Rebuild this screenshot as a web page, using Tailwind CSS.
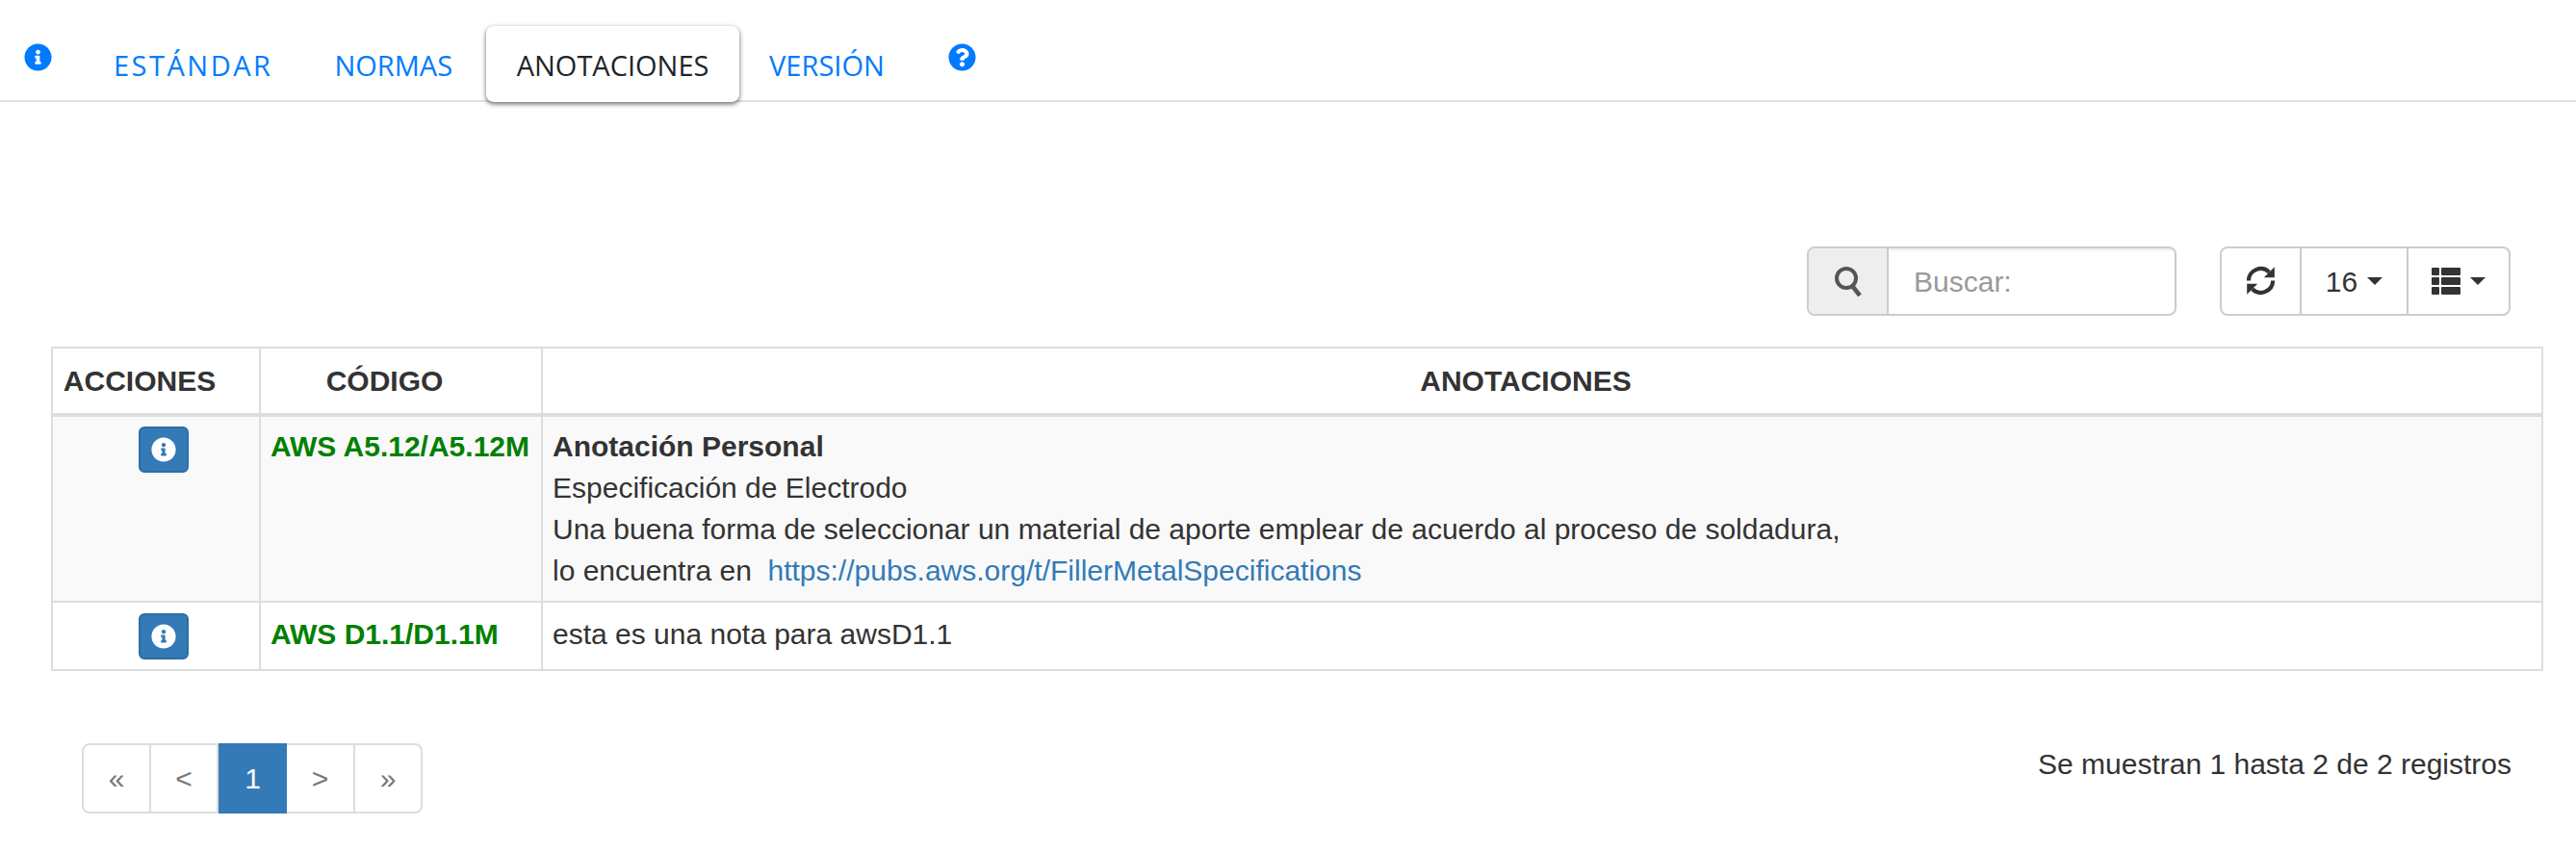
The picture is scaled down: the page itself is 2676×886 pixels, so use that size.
<!DOCTYPE html>
<html lang="es">

<head>
    <meta charset="UTF-8" />
    <title>Anotaciones</title>
    <script src="https://cdn.jsdelivr.net/npm/@tailwindcss/browser@4"></script>
</head>

<body class="bg-white font-['Liberation_Sans',Arial,sans-serif] text-[30px] leading-[43px] text-[#333]">

    <!-- Tabs -->
    <div class="flex items-start h-[106px] pt-[27px] border-b-2 border-[#dee2e6] font-['Open_Sans',sans-serif] text-[29px] leading-[40px]">
        <svg class="ml-[25px] mt-[18px] w-[29px] h-[29px] text-[#007bff]" viewBox="0 0 512 512" fill="currentColor"><path d="M256 8C119.043 8 8 119.083 8 256c0 136.997 111.043 248 248 248s248-111.003 248-248C504 119.083 392.957 8 256 8zm0 110c23.196 0 42 18.804 42 42s-18.804 42-42 42-42-18.804-42-42 18.804-42 42-42zm56 254c0 6.627-5.373 12-12 12h-88c-6.627 0-12-5.373-12-12v-24c0-6.627 5.373-12 12-12h12v-64h-12c-6.627 0-12-5.373-12-12v-24c0-6.627 5.373-12 12-12h64c6.627 0 12 5.373 12 12v100h12c6.627 0 12 5.373 12 12v24z"/></svg>
        <a class="ml-[64px] mt-[21px] text-[#007bff] tracking-[2.5px]">ESTÁNDAR</a>
        <a class="ml-[64px] mt-[21px] text-[#007bff]">NORMAS</a>
        <a class="ml-[35px] w-[263px] h-[79px] pt-[21px] text-center rounded-lg bg-white text-[#212529] shadow-[0_2px_5px_rgba(0,0,0,0.6)]">ANOTACIONES</a>
        <a class="ml-[31px] mt-[21px] text-[#007bff]">VERSIÓN</a>
        <svg class="ml-[66px] mt-[18px] w-[29px] h-[29px] text-[#007bff]" viewBox="0 0 512 512" fill="currentColor"><path d="M504 256c0 136.997-111.043 248-248 248S8 392.997 8 256C8 119.083 119.043 8 256 8s248 111.083 248 248zM262.655 90c-54.497 0-89.255 22.957-116.549 63.758-3.536 5.286-2.353 12.415 2.715 16.258l34.699 26.31c5.205 3.947 12.621 3.008 16.665-2.122 17.864-22.658 30.113-35.797 57.303-35.797 20.429 0 45.698 13.148 45.698 32.958 0 14.976-12.363 22.667-32.534 33.976C247.128 238.528 216 254.941 216 296v4c0 6.627 5.373 12 12 12h56c6.627 0 12-5.373 12-12v-1.333c0-28.462 83.186-29.647 83.186-106.667 0-58.002-60.165-102-116.531-102zM256 338c-25.365 0-46 20.635-46 46 0 25.364 20.635 46 46 46s46-20.636 46-46c0-25.365-20.635-46-46-46z"/></svg>
    </div>

    <!-- Toolbar -->
    <div class="flex justify-end mt-[150px] pr-[68px] h-[72px]">
        <div class="flex w-[384px] border-2 border-[#ccc] rounded-lg overflow-hidden">
            <span class="flex items-center justify-center w-[83px] bg-[#eee] border-r-2 border-[#ccc]">
                <svg class="w-[30px] h-[32px] text-[#555]" viewBox="0 0 30 32" fill="none" stroke="currentColor"><circle cx="13" cy="13" r="10" stroke-width="4"/><path d="M20 22l7 9" stroke-width="4.5"/></svg>
            </span>
            <span class="flex flex-1 items-center pl-[26px] text-[#999] shadow-[inset_0_2px_2px_rgba(0,0,0,0.075)]">Buscar:</span>
        </div>
        <div class="flex ml-[45px] w-[302px] border-2 border-[#ccc] rounded-lg">
            <span class="flex items-center justify-center w-[83px] border-r-2 border-[#ccc]">
                <svg class="w-[33px] h-[33px] -mt-[2px] text-[#333]" viewBox="0 0 30 30" fill="none" stroke="currentColor"><path d="M3.5 15A11.5 11.5 0 0 1 23 7" stroke-width="3.8"/><path d="M26.5 15A11.5 11.5 0 0 1 7 23" stroke-width="3.8"/><path d="M28 2v10H18zM2 28V18h10z" fill="currentColor" stroke="none"/></svg>
            </span>
            <span class="flex items-center justify-center gap-[10px] w-[111px] border-r-2 border-[#ccc]">
                16
                <span class="w-0 h-0 border-x-[8px] border-x-transparent border-t-[8px] border-t-[#333]"></span>
            </span>
            <span class="flex items-center justify-center gap-[10px] flex-1">
                <svg class="w-[30px] h-[28px] text-[#333]" viewBox="0 0 30 28" fill="currentColor"><rect width="8" height="8" rx="1"/><rect x="10" width="20" height="8" rx="1"/><rect y="10" width="8" height="8" rx="1"/><rect x="10" y="10" width="20" height="8" rx="1"/><rect y="20" width="8" height="8" rx="1"/><rect x="10" y="20" width="20" height="8" rx="1"/></svg>
                <span class="w-0 h-0 border-x-[8px] border-x-transparent border-t-[8px] border-t-[#333]"></span>
            </span>
        </div>
    </div>

    <!-- Table -->
    <div class="mx-[53px] mt-[32px]">
        <table class="w-[2589px] table-fixed border-collapse border-2 border-[#ddd]">
            <colgroup>
                <col class="w-[216px]">
                <col class="w-[293px]">
                <col>
            </colgroup>
            <thead>
                <tr class="h-[70px]">
                    <th class="border-2 border-b-4 border-[#ddd] pl-[10px] pr-[44px] text-center font-bold">ACCIONES</th>
                    <th class="border-2 border-b-4 border-[#ddd] pl-[10px] pr-[44px] text-center font-bold">CÓDIGO</th>
                    <th class="border-2 border-b-4 border-[#ddd] pl-[10px] pr-[44px] text-center font-bold">ANOTACIONES</th>
                </tr>
            </thead>
            <tbody>
                <tr class="bg-[#f9f9f9]">
                    <td class="border-2 border-[#ddd] px-[10px] pt-[10px] align-top text-center">
                        <button class="inline-flex items-center justify-center ml-[15px] w-[52px] h-[48px] align-top rounded-md bg-[#337ab7] border-2 border-[#2e6da4]">
                            <svg class="w-[26px] h-[26px] text-white" viewBox="0 0 512 512" fill="currentColor"><path d="M256 8C119.043 8 8 119.083 8 256c0 136.997 111.043 248 248 248s248-111.003 248-248C504 119.083 392.957 8 256 8zm0 110c23.196 0 42 18.804 42 42s-18.804 42-42 42-42-18.804-42-42 18.804-42 42-42zm56 254c0 6.627-5.373 12-12 12h-88c-6.627 0-12-5.373-12-12v-24c0-6.627 5.373-12 12-12h12v-64h-12c-6.627 0-12-5.373-12-12v-24c0-6.627 5.373-12 12-12h64c6.627 0 12 5.373 12 12v100h12c6.627 0 12 5.373 12 12v24z"/></svg>
                        </button>
                    </td>
                    <td class="border-2 border-[#ddd] px-[10px] pt-[9px] pb-[10px] align-top font-bold text-[#008000]">AWS A5.12/A5.12M</td>
                    <td class="border-2 border-[#ddd] px-[10px] pt-[9px] pb-[10px] align-top">
                        <b>Anotación Personal</b><br>
                        Especificación de Electrodo<br>
                        Una buena forma de seleccionar un material de aporte emplear de acuerdo al proceso de soldadura,<br>
                        lo encuentra en &nbsp;<a class="text-[#337ab7]">https://pubs.aws.org/t/FillerMetalSpecifications</a>
                    </td>
                </tr>
                <tr class="h-[71px]">
                    <td class="border-2 border-[#ddd] px-[10px] pt-[11px] align-top text-center">
                        <button class="inline-flex items-center justify-center ml-[15px] w-[52px] h-[48px] align-top rounded-md bg-[#337ab7] border-2 border-[#2e6da4]">
                            <svg class="w-[26px] h-[26px] text-white" viewBox="0 0 512 512" fill="currentColor"><path d="M256 8C119.043 8 8 119.083 8 256c0 136.997 111.043 248 248 248s248-111.003 248-248C504 119.083 392.957 8 256 8zm0 110c23.196 0 42 18.804 42 42s-18.804 42-42 42-42-18.804-42-42 18.804-42 42-42zm56 254c0 6.627-5.373 12-12 12h-88c-6.627 0-12-5.373-12-12v-24c0-6.627 5.373-12 12-12h12v-64h-12c-6.627 0-12-5.373-12-12v-24c0-6.627 5.373-12 12-12h64c6.627 0 12 5.373 12 12v100h12c6.627 0 12 5.373 12 12v24z"/></svg>
                        </button>
                    </td>
                    <td class="border-2 border-[#ddd] px-[10px] pt-[11px] align-top font-bold text-[#008000]">AWS D1.1/D1.1M</td>
                    <td class="border-2 border-[#ddd] px-[10px] pt-[11px] align-top">esta es una nota para awsD1.1</td>
                </tr>
            </tbody>
        </table>
    </div>

    <!-- Footer -->
    <div class="flex justify-between items-start mt-[75px] pl-[85px] pr-[67px]">
        <div class="flex h-[73px] text-[#777]">
            <a class="flex w-[72px] items-center justify-center border-2 border-[#ddd] rounded-l-lg">«</a>
            <a class="flex w-[70px] items-center justify-center border-y-2 border-r-2 border-[#ddd]">&lt;</a>
            <a class="flex w-[71px] items-center justify-center bg-[#337ab7] text-white">1</a>
            <a class="flex w-[71px] items-center justify-center border-y-2 border-r-2 border-[#ddd]">&gt;</a>
            <a class="flex w-[70px] items-center justify-center border-y-2 border-r-2 border-[#ddd] rounded-r-lg">»</a>
        </div>
        <span class="text-[#333]">Se muestran 1 hasta 2 de 2 registros</span>
    </div>

</body>

</html>
